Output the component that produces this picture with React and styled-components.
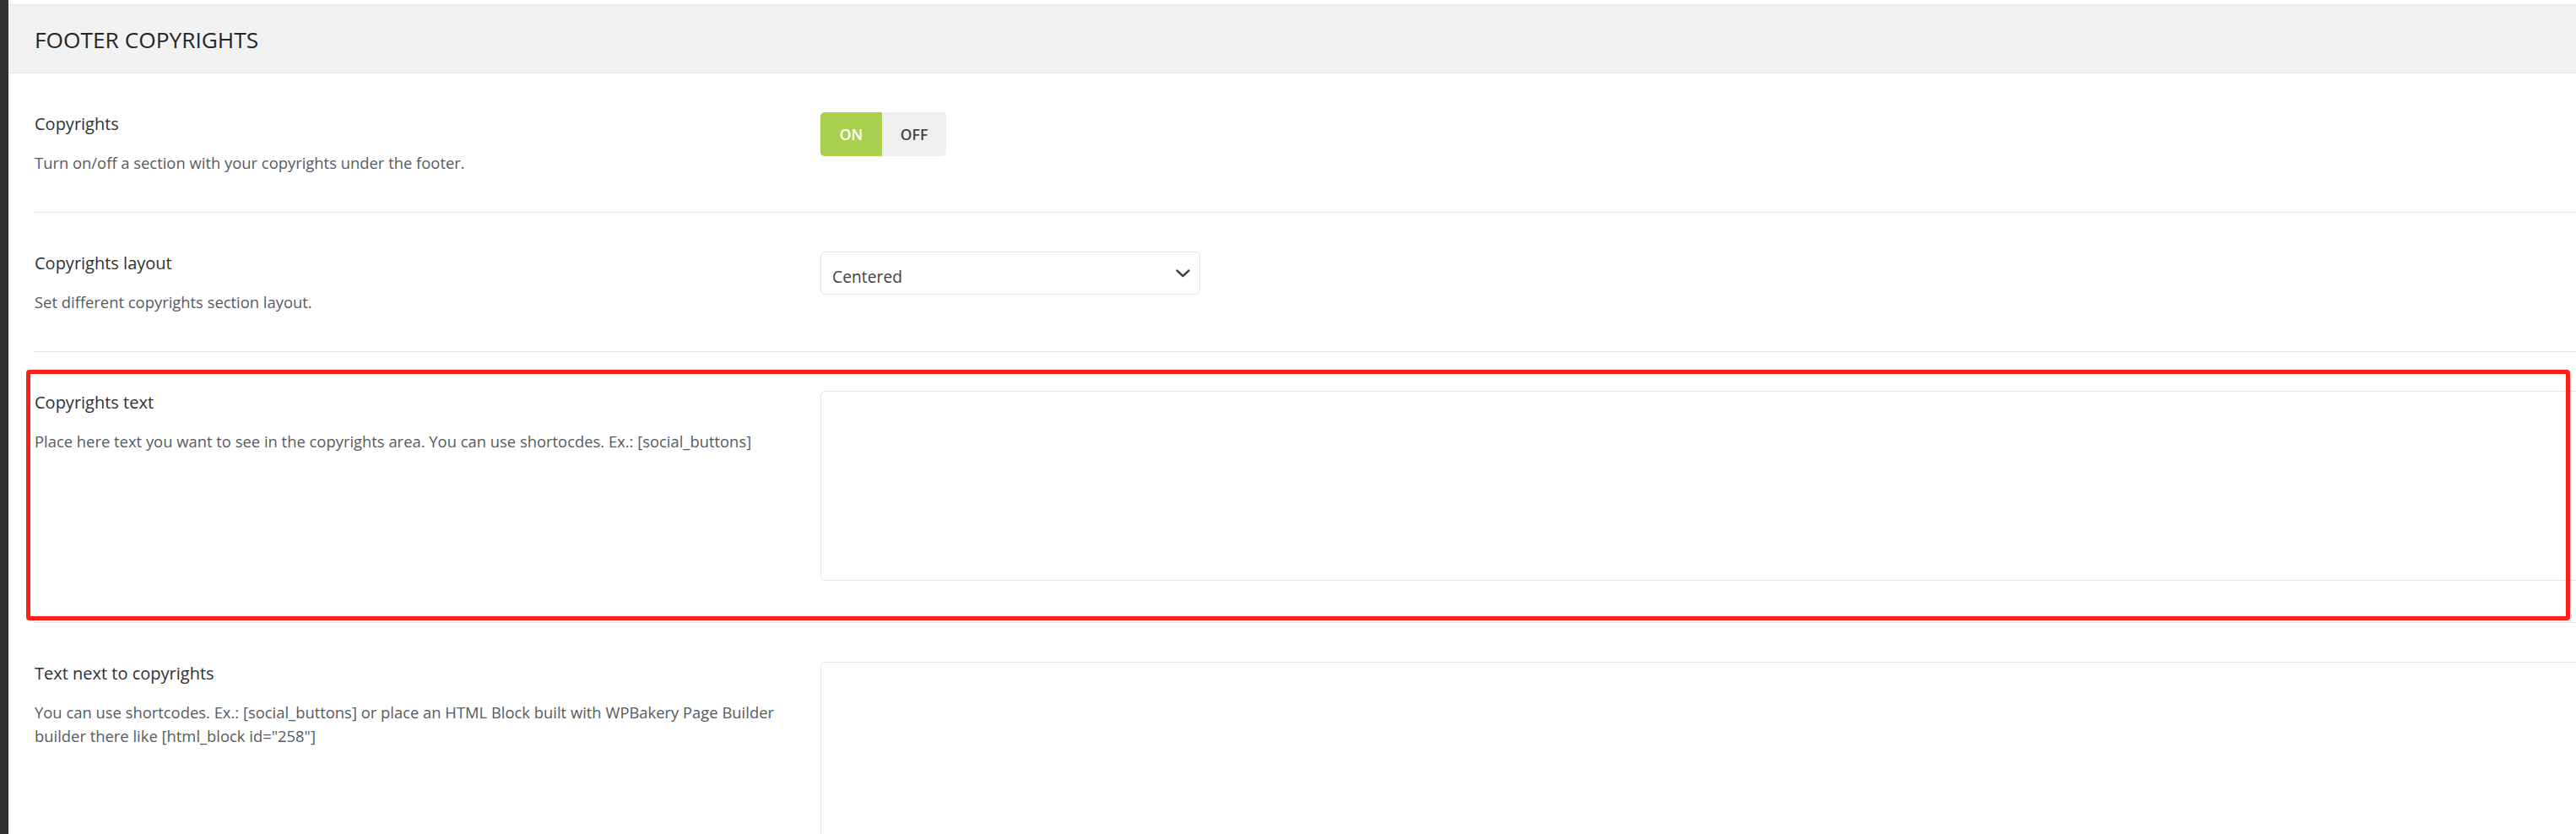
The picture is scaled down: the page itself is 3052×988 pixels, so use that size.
import React from "react";
import styled, { createGlobalStyle } from "styled-components";

const GlobalStyle = createGlobalStyle`
  html, body {
    margin: 0;
    padding: 0;
    background: #ffffff;
    overflow: hidden;
  }
  body {
    font-family: "Open Sans", "Noto Sans", "Liberation Sans", sans-serif;
    color: #333333;
  }
  * { box-sizing: border-box; }
`;

const Page = styled.div`
  display: flex;
  min-height: 100vh;
  width: 100vw;
`;

const SideBar = styled.div`
  flex: 0 0 10px;
  background: #313131;
`;

const Main = styled.main`
  flex: 1;
  min-width: 0;
  padding-top: 5px;
  overflow: hidden;
`;

const Header = styled.header`
  display: flex;
  align-items: center;
  height: 82px;
  padding: 1px 0 0 31px;
  background: #f2f2f2;
  border-top: 1px solid #e6e6e6;
  border-bottom: 1px solid #e2e2e2;
`;

const HeaderTitle = styled.h2`
  margin: 0;
  font-size: 26.3px;
  font-weight: 400;
  color: #232629;
  letter-spacing: 0;
`;

const Settings = styled.section`
  padding-left: 30px;
`;

const Row = styled.div`
  position: relative;
  display: grid;
  grid-template-columns: 920px 1fr;
  column-gap: 12px;
  padding: 46px 0 44px;
  border-bottom: 1px solid #e4e4e4;
`;

const Label = styled.div`
  padding-left: 1px;
`;

const Title = styled.h3`
  margin: 0 0 18px;
  font-size: 20px;
  line-height: 28px;
  font-weight: 500;
  color: #2f3133;
`;

const Description = styled.p`
  margin: 0;
  font-size: 18.4px;
  line-height: 28px;
  font-weight: 400;
  color: #585b5e;
`;

const Control = styled.div`
  min-width: 0;
`;

const Toggle = styled.div`
  display: inline-flex;
  height: 52px;
  border-radius: 5px;
  overflow: hidden;
`;

const ToggleOption = styled.span`
  display: flex;
  align-items: center;
  justify-content: center;
  width: ${(p) => (p.$active ? "73px" : "76px")};
  background: ${(p) => (p.$active ? "#aad04f" : "#efefef")};
  color: ${(p) => (p.$active ? "#ffffff" : "#454545")};
  font-size: 17.5px;
  font-weight: 600;
`;

const Select = styled.div`
  display: flex;
  align-items: center;
  justify-content: space-between;
  width: 450px;
  height: 51px;
  padding: 0 11px 0 13px;
  border: 1px solid #e3e3e3;
  border-radius: 6px;
  background: #ffffff;
`;

const SelectValue = styled.span`
  padding-top: 8px;
  font-size: 19.3px;
  color: #444444;
`;

const TextArea = styled.textarea`
  display: block;
  width: calc(100% + 60px);
  height: 225px;
  margin: 0 0 5px;
  padding: 12px;
  border: 1px solid #e6e6e6;
  border-radius: 6px;
  background: #ffffff;
  resize: none;
  outline: none;
  font: inherit;
`;

const HighlightFrame = styled.div`
  position: absolute;
  top: 21px;
  left: -9px;
  right: 7px;
  bottom: 2px;
  border: 5px solid #ff1f17;
  border-radius: 4px;
  pointer-events: none;
`;

const Chevron = () => (
  <svg width="17" height="10" viewBox="0 0 17 10" fill="none">
    <polyline
      points="1.5,1.5 8.5,8 15.5,1.5"
      stroke="#444444"
      strokeWidth="2.4"
      strokeLinecap="round"
      strokeLinejoin="round"
    />
  </svg>
);

const settings = [
  {
    title: "Copyrights",
    description: "Turn on/off a section with your copyrights under the footer.",
    type: "toggle",
  },
  {
    title: "Copyrights layout",
    description: "Set different copyrights section layout.",
    type: "select",
  },
  {
    title: "Copyrights text",
    description:
      "Place here text you want to see in the copyrights area. You can use shortocdes. Ex.: [social_buttons]",
    type: "textarea",
    highlighted: true,
  },
  {
    title: "Text next to copyrights",
    description:
      'You can use shortcodes. Ex.: [social_buttons] or place an HTML Block built with WPBakery Page Builder builder there like [html_block id="258"]',
    type: "textarea",
  },
];

function renderControl(type) {
  if (type === "toggle") {
    return (
      <Toggle>
        <ToggleOption $active>ON</ToggleOption>
        <ToggleOption>OFF</ToggleOption>
      </Toggle>
    );
  }
  if (type === "select") {
    return (
      <Select>
        <SelectValue>Centered</SelectValue>
        <Chevron />
      </Select>
    );
  }
  return <TextArea readOnly defaultValue="" />;
}

export default function App() {
  return (
    <>
      <GlobalStyle />
      <Page>
        <SideBar />
        <Main>
          <Header>
            <HeaderTitle>FOOTER COPYRIGHTS</HeaderTitle>
          </Header>
          <Settings>
            {settings.map((s) => (
              <Row key={s.title}>
                <Label>
                  <Title>{s.title}</Title>
                  <Description>{s.description}</Description>
                </Label>
                <Control>{renderControl(s.type)}</Control>
                {s.highlighted && <HighlightFrame />}
              </Row>
            ))}
          </Settings>
        </Main>
      </Page>
    </>
  );
}
